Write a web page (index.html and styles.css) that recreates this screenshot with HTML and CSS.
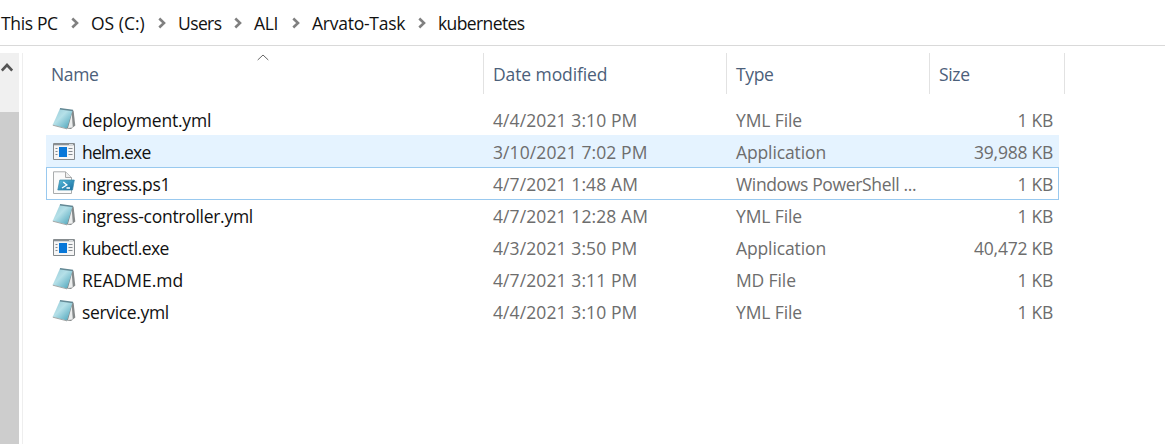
FILE: index.html
```html
<!DOCTYPE html>
<html lang="en">
<head>
<meta charset="utf-8">
<title>kubernetes</title>
<link rel="stylesheet" href="styles.css">
</head>
<body>
<svg class="defs" width="0" height="0" aria-hidden="true">
  <defs>
    <linearGradient id="cover" x1="0" y1="0" x2="1" y2="1">
      <stop offset="0" stop-color="#94c9d6"/><stop offset=".42" stop-color="#b5e0e8"/><stop offset="1" stop-color="#3f9db5"/>
    </linearGradient>
    <linearGradient id="shell" x1="0" y1="0" x2="1" y2="1">
      <stop offset="0" stop-color="#58bddb"/><stop offset="1" stop-color="#176b9f"/>
    </linearGradient>
    <symbol id="note" viewBox="0 0 24 24">
      <path d="M19.500 3L21.600 3.800L23.300 18.500L19 22L14.500 21.500Z" fill="#85898a"/>
      <path d="M19.800 7L16 21L20.800 20.500Z" fill="#eceeee"/>
      <path d="M8 1.500L20.700 3.200L15 21.600L.7 18Z" fill="url(#cover)"/>
      <path d="M8 1.800L21 3.400" stroke="#648894" stroke-width="1.500"/>
      <path d="M.8 18.200L15 21.900" stroke="#8f9290" stroke-width=".8"/>
    </symbol>
    <symbol id="app" viewBox="0 0 24 24">
      <path d="M1.500 4.500H22.500V20.500H1.500Z" fill="#f5f5f5" stroke="#858a8d" stroke-width="1"/>
      <path d="M2 5.500H22" stroke="#899095" stroke-width="1.600"/>
      <path d="M17 5.500H21" stroke="#d6dadd" stroke-width="1"/>
      <path d="M7 8H15V18H7Z" fill="#0877d8"/>
      <path d="M3.500 9.500H5.500M3.500 12.500H5.500M3.500 15.500H5.500M16.500 9.500H20.500M16.500 12.500H20.500M16.500 15.500H20.500" stroke="#858b90" stroke-width="1"/>
    </symbol>
    <symbol id="script" viewBox="0 0 24 24">
      <path d="M1.500 .8H13.500L19.500 6.500V22.500H1.500Z" fill="#fbfbfb" stroke="#a9acad" stroke-width="1"/>
      <path d="M13.500 1V6.500H19.500" fill="#ededed" stroke="#a0a0a0" stroke-width=".9"/>
      <path d="M7.800 9H22.300L20.500 19H5.800Z" fill="url(#shell)" stroke="#3586a8" stroke-width=".7"/>
      <path d="M11.300 11L14.800 14L10 17M14.500 17H18" fill="none" stroke="#fff" stroke-width="1.400"/>
    </symbol>
    <symbol id="crumb" viewBox="0 0 8 12">
      <path d="M1.300 1.500L6 6L1.300 10.500" fill="none" stroke="#808080" stroke-width="2.600"/>
    </symbol>
  </defs>
</svg>

<div class="window">
  <nav class="address">
    <span class="crumb c1">This PC</span><svg class="sep"><use href="#crumb"/></svg>
    <span class="crumb c2">OS (C:)</span><svg class="sep"><use href="#crumb"/></svg>
    <span class="crumb c3">Users</span><svg class="sep"><use href="#crumb"/></svg>
    <span class="crumb c4">ALI</span><svg class="sep"><use href="#crumb"/></svg>
    <span class="crumb c5">Arvato-Task</span><svg class="sep"><use href="#crumb"/></svg>
    <span class="crumb c6">kubernetes</span>
  </nav>
  <div class="body">
    <aside class="scroll">
      <div class="up"><svg width="12" height="10" viewBox="0 0 12 10"><path d="M.8 8.500L6 3L11.200 8.500" fill="none" stroke="#555" stroke-width="2.600"/></svg></div>
      <div class="thumb"></div>
    </aside>
    <main class="pane">
      <header class="head">
        <span class="h-name">Name<svg class="sort" width="12" height="7" viewBox="0 0 12 7"><path d="M.7 6L6 1L11.300 6" fill="none" stroke="#666" stroke-width="1"/></svg></span>
        <span class="h-date">Date modified</span><span>Type</span><span>Size</span>
      </header>
      <div class="row"><svg class="icon"><use href="#note"/></svg><span class="name wide">deployment.yml</span><span class="date">4/4/2021 3:10 PM</span><span class="type">YML File</span><span class="size">1 KB</span></div>
      <div class="row hover"><svg class="icon"><use href="#app"/></svg><span class="name tight">helm.exe</span><span class="date">3/10/2021 7:02 PM</span><span class="type">Application</span><span class="size">39,988 KB</span></div>
      <div class="row focus"><svg class="icon"><use href="#script"/></svg><span class="name">ingress.ps1</span><span class="date">4/7/2021 1:48 AM</span><span class="type long">Windows PowerShell ...</span><span class="size">1 KB</span></div>
      <div class="row"><svg class="icon"><use href="#note"/></svg><span class="name long-name">ingress-controller.yml</span><span class="date">4/7/2021 12:28 AM</span><span class="type">YML File</span><span class="size">1 KB</span></div>
      <div class="row"><svg class="icon"><use href="#app"/></svg><span class="name snug">kubectl.exe</span><span class="date">4/3/2021 3:50 PM</span><span class="type">Application</span><span class="size">40,472 KB</span></div>
      <div class="row"><svg class="icon"><use href="#note"/></svg><span class="name caps">README.md</span><span class="date">4/7/2021 3:11 PM</span><span class="type">MD File</span><span class="size">1 KB</span></div>
      <div class="row"><svg class="icon"><use href="#note"/></svg><span class="name">service.yml</span><span class="date">4/4/2021 3:10 PM</span><span class="type">YML File</span><span class="size">1 KB</span></div>
    </main>
  </div>
</div>
</body>
</html>
```
FILE: styles.css
```css
* { box-sizing: border-box; }
body { margin: 0; background: #fff; color: #111; font: 17.5px/24px "Open Sans", sans-serif; letter-spacing: -0.35px; }
.defs { position: absolute; }
.window { height: 444px; display: flex; flex-direction: column; overflow: hidden; }
.address { height: 46px; flex: none; display: flex; align-items: center; border-bottom: 1px solid #d9d9d9; white-space: nowrap; }
.crumb { flex: none; }
.c1 { width: 71px; padding-left: 1px; }
.c2 { width: 67px; letter-spacing: 0; }
.c3 { width: 56px; letter-spacing: -0.6px; }
.c4 { width: 38px; }
.c5 { width: 106px; letter-spacing: -0.25px; }
.c6 { letter-spacing: -0.6px; }
.sep { width: 8px; height: 12px; flex: none; margin: 1px 12px 0 0; }
.body { flex: 1; display: flex; padding-top: 7px; }
.scroll { width: 22px; flex: none; background: #f0f0f0; border-right: 3px solid #fff; box-shadow: 1px 0 #eee; }
.up { height: 59px; padding: 9px 0 0 1px; }
.up svg { display: block; }
.thumb { height: 332px; background: #cdcdcd; }
.pane { flex: 1; padding-left: 24px; }
.head { height: 41px; margin-bottom: 9px; display: grid; grid-template-columns: 438px 243px 203px 135px; color: #4c607a; line-height: 43px; }
.head span { position: relative; height: 41px; border-right: 1px solid #e2e2e2; padding-left: 9px; }
.head .h-name { padding-left: 5px; }
.head .h-date { letter-spacing: -0.1px; }
.sort { position: absolute; left: 211px; top: 1px; }
.row { width: 1013px; height: 32px; display: grid; grid-template-columns: 36px 411px 243px 203px 114px; align-items: center; color: #6d6d6d; white-space: nowrap; }
.row span { padding-top: 2px; }
.icon { width: 24px; height: 24px; margin-left: 6px; }
.name { color: #111; }
.wide { letter-spacing: -0.2px; }
.tight { letter-spacing: -0.75px; }
.snug { letter-spacing: -0.55px; }
.long-name { letter-spacing: -0.29px; }
.caps { letter-spacing: 0; }
.date { letter-spacing: 0.1px; }
.type { letter-spacing: -0.12px; }
.long { letter-spacing: -0.35px; }
.size { text-align: right; letter-spacing: -0.25px; }
.hover { background: #e5f3ff; }
.focus { height: 33px; margin-bottom: -1px; padding-bottom: 1px; box-shadow: inset 0 0 0 1px #99c9ef; }
```
